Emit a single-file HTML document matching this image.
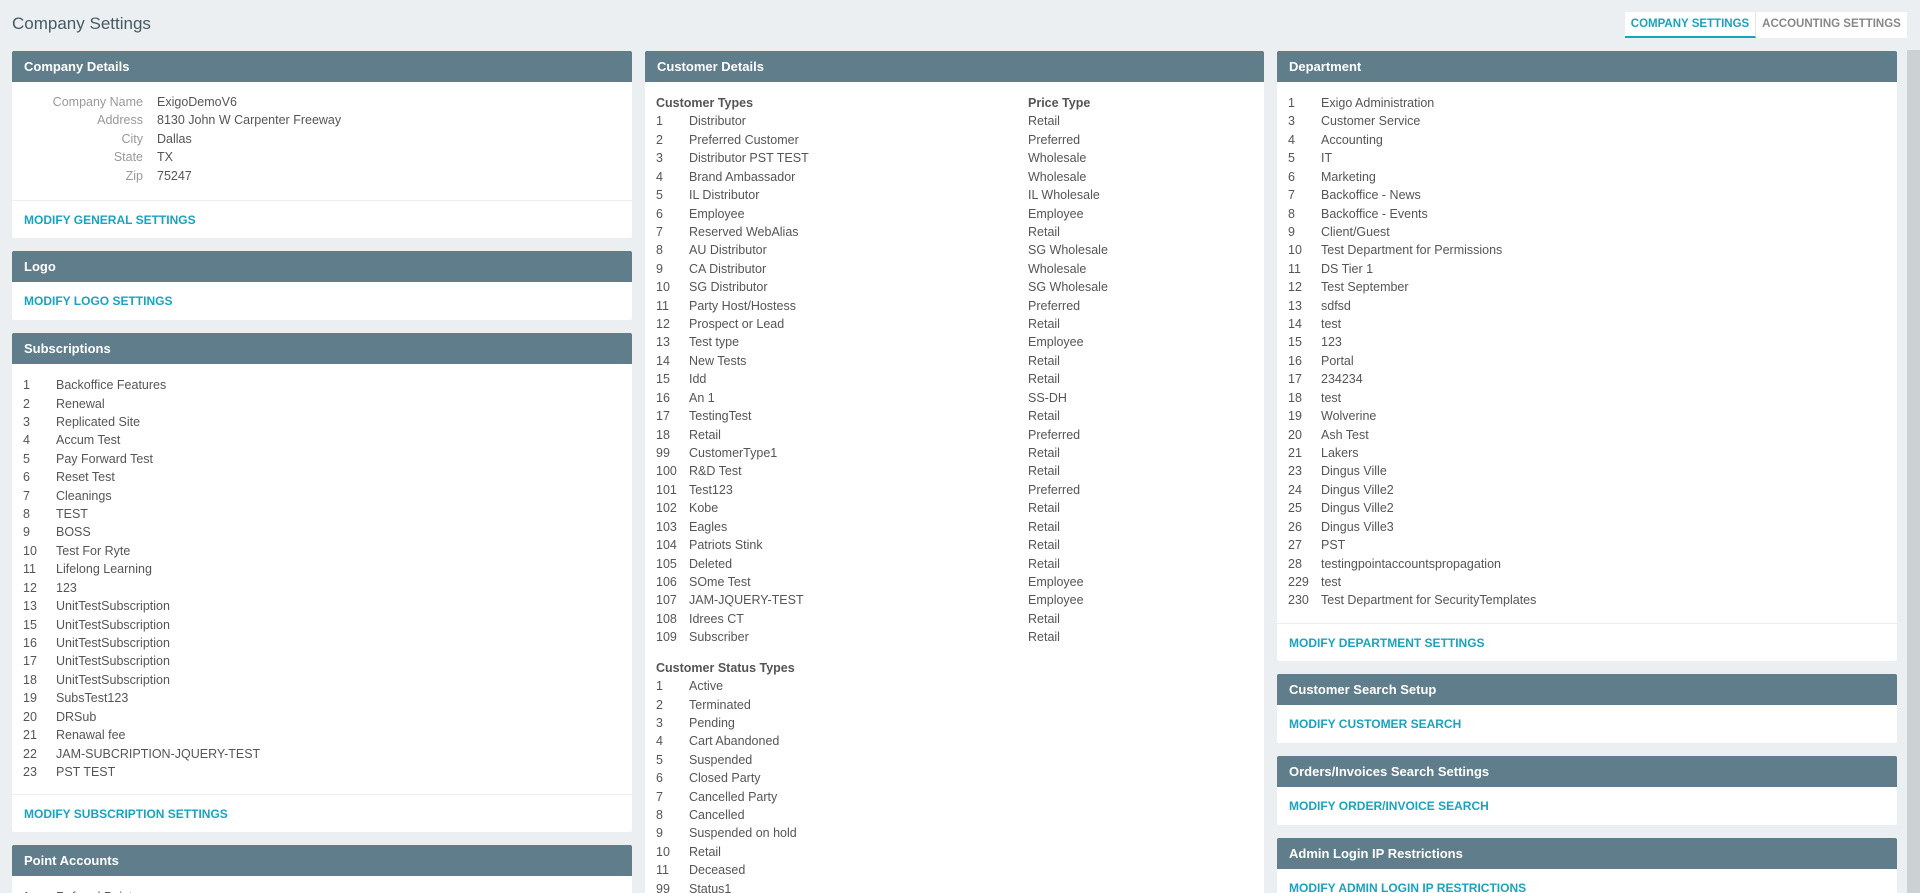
<!DOCTYPE html>
<html><head><meta charset="utf-8"><style>
*{box-sizing:border-box;margin:0;padding:0}
html{height:893px;overflow:hidden}
body{width:1920px;height:893px;overflow:hidden;background:#eceff1;font-family:"Liberation Sans",Arial,sans-serif;font-size:12.5px;color:#555;position:relative}
h1{position:absolute;left:12px;top:13px;font-size:17px;font-weight:normal;color:#455a64;line-height:22px}
.tabs{position:absolute;left:1625px;top:12px;height:26px;width:282px;display:flex;background:#fff;white-space:nowrap}
.tab{font-size:11.5px;font-weight:bold;line-height:24px;color:#888;border-bottom:2px solid transparent;text-align:center}
.tab.a{color:#1aa3bf;border-bottom-color:#1aa3bf;border-right:1px solid #e4e7e9;width:131px}
.tab:not(.a){flex:1}
.sb{position:absolute;left:1907px;top:50px;width:13px;height:843px;background:#ccd1d4}
.col{position:absolute;top:51px}
.p{background:#fff;border-radius:2px;margin-bottom:13px;overflow:hidden}
.h{background:#607d8b;color:#fff;font-weight:bold;height:31px;line-height:31px;padding-left:12px;font-size:13px}
.b{padding:12px 0 13px}
.r{height:18.43px;line-height:18.43px;white-space:nowrap;position:relative}
.n{position:absolute;left:11px}
.t{position:absolute;left:44px}
.pr{position:absolute;left:383px}
.lk{border-top:1px solid #eceff1;height:38px;line-height:38px;padding-left:12px;color:#1aa3bf;font-weight:bold;font-size:12px}
.lk.nb{border-top:none}
.bh{font-weight:bold;color:#555}
.lb{position:absolute;right:calc(100% - 131px);color:#999;text-align:right}
.lv{position:absolute;left:145px}
</style></head><body>
<h1>Company Settings</h1>
<div class="tabs"><div class="tab a">COMPANY SETTINGS</div><div class="tab">ACCOUNTING SETTINGS</div></div>
<div class="sb"></div>

<div class="col" style="left:12px;width:620px">
 <div class="p"><div class="h">Company Details</div>
  <div class="b" style="padding-top:11px;padding-bottom:15px">
   <div class="r"><span class="lb">Company Name</span><span class="lv">ExigoDemoV6</span></div>
   <div class="r"><span class="lb">Address</span><span class="lv">8130 John W Carpenter Freeway</span></div>
   <div class="r"><span class="lb">City</span><span class="lv">Dallas</span></div>
   <div class="r"><span class="lb">State</span><span class="lv">TX</span></div>
   <div class="r"><span class="lb">Zip</span><span class="lv">75247</span></div>
  </div>
  <div class="lk">MODIFY GENERAL SETTINGS</div></div>
 <div class="p"><div class="h">Logo</div><div class="lk nb">MODIFY LOGO SETTINGS</div></div>
 <div class="p"><div class="h">Subscriptions</div><div class="b">
  <div class="r"><span class="n">1</span><span class="t">Backoffice Features</span></div>
  <div class="r"><span class="n">2</span><span class="t">Renewal</span></div>
  <div class="r"><span class="n">3</span><span class="t">Replicated Site</span></div>
  <div class="r"><span class="n">4</span><span class="t">Accum Test</span></div>
  <div class="r"><span class="n">5</span><span class="t">Pay Forward Test</span></div>
  <div class="r"><span class="n">6</span><span class="t">Reset Test</span></div>
  <div class="r"><span class="n">7</span><span class="t">Cleanings</span></div>
  <div class="r"><span class="n">8</span><span class="t">TEST</span></div>
  <div class="r"><span class="n">9</span><span class="t">BOSS</span></div>
  <div class="r"><span class="n">10</span><span class="t">Test For Ryte</span></div>
  <div class="r"><span class="n">11</span><span class="t">Lifelong Learning</span></div>
  <div class="r"><span class="n">12</span><span class="t">123</span></div>
  <div class="r"><span class="n">13</span><span class="t">UnitTestSubscription</span></div>
  <div class="r"><span class="n">15</span><span class="t">UnitTestSubscription</span></div>
  <div class="r"><span class="n">16</span><span class="t">UnitTestSubscription</span></div>
  <div class="r"><span class="n">17</span><span class="t">UnitTestSubscription</span></div>
  <div class="r"><span class="n">18</span><span class="t">UnitTestSubscription</span></div>
  <div class="r"><span class="n">19</span><span class="t">SubsTest123</span></div>
  <div class="r"><span class="n">20</span><span class="t">DRSub</span></div>
  <div class="r"><span class="n">21</span><span class="t">Renawal fee</span></div>
  <div class="r"><span class="n">22</span><span class="t">JAM-SUBCRIPTION-JQUERY-TEST</span></div>
  <div class="r"><span class="n">23</span><span class="t">PST TEST</span></div>
 </div><div class="lk">MODIFY SUBSCRIPTION SETTINGS</div></div>
 <div class="p"><div class="h">Point Accounts</div><div class="b">
  <div class="r"><span class="n">1</span><span class="t">Referral Points</span></div>
 </div></div>
</div>

<div class="col" style="left:645px;width:619px">
 <div class="p" style="height:900px"><div class="h">Customer Details</div><div class="b">
  <div class="r bh"><span class="n">Customer Types</span><span class="pr">Price Type</span></div>
  <div class="r"><span class="n">1</span><span class="t">Distributor</span><span class="pr">Retail</span></div>
  <div class="r"><span class="n">2</span><span class="t">Preferred Customer</span><span class="pr">Preferred</span></div>
  <div class="r"><span class="n">3</span><span class="t">Distributor PST TEST</span><span class="pr">Wholesale</span></div>
  <div class="r"><span class="n">4</span><span class="t">Brand Ambassador</span><span class="pr">Wholesale</span></div>
  <div class="r"><span class="n">5</span><span class="t">IL Distributor</span><span class="pr">IL Wholesale</span></div>
  <div class="r"><span class="n">6</span><span class="t">Employee</span><span class="pr">Employee</span></div>
  <div class="r"><span class="n">7</span><span class="t">Reserved WebAlias</span><span class="pr">Retail</span></div>
  <div class="r"><span class="n">8</span><span class="t">AU Distributor</span><span class="pr">SG Wholesale</span></div>
  <div class="r"><span class="n">9</span><span class="t">CA Distributor</span><span class="pr">Wholesale</span></div>
  <div class="r"><span class="n">10</span><span class="t">SG Distributor</span><span class="pr">SG Wholesale</span></div>
  <div class="r"><span class="n">11</span><span class="t">Party Host/Hostess</span><span class="pr">Preferred</span></div>
  <div class="r"><span class="n">12</span><span class="t">Prospect or Lead</span><span class="pr">Retail</span></div>
  <div class="r"><span class="n">13</span><span class="t">Test type</span><span class="pr">Employee</span></div>
  <div class="r"><span class="n">14</span><span class="t">New Tests</span><span class="pr">Retail</span></div>
  <div class="r"><span class="n">15</span><span class="t">Idd</span><span class="pr">Retail</span></div>
  <div class="r"><span class="n">16</span><span class="t">An 1</span><span class="pr">SS-DH</span></div>
  <div class="r"><span class="n">17</span><span class="t">TestingTest</span><span class="pr">Retail</span></div>
  <div class="r"><span class="n">18</span><span class="t">Retail</span><span class="pr">Preferred</span></div>
  <div class="r"><span class="n">99</span><span class="t">CustomerType1</span><span class="pr">Retail</span></div>
  <div class="r"><span class="n">100</span><span class="t">R&amp;D Test</span><span class="pr">Retail</span></div>
  <div class="r"><span class="n">101</span><span class="t">Test123</span><span class="pr">Preferred</span></div>
  <div class="r"><span class="n">102</span><span class="t">Kobe</span><span class="pr">Retail</span></div>
  <div class="r"><span class="n">103</span><span class="t">Eagles</span><span class="pr">Retail</span></div>
  <div class="r"><span class="n">104</span><span class="t">Patriots Stink</span><span class="pr">Retail</span></div>
  <div class="r"><span class="n">105</span><span class="t">Deleted</span><span class="pr">Retail</span></div>
  <div class="r"><span class="n">106</span><span class="t">SOme Test</span><span class="pr">Employee</span></div>
  <div class="r"><span class="n">107</span><span class="t">JAM-JQUERY-TEST</span><span class="pr">Employee</span></div>
  <div class="r"><span class="n">108</span><span class="t">Idrees CT</span><span class="pr">Retail</span></div>
  <div class="r"><span class="n">109</span><span class="t">Subscriber</span><span class="pr">Retail</span></div>
  <div class="r bh" style="margin-top:12px"><span class="n">Customer Status Types</span></div>
  <div class="r"><span class="n">1</span><span class="t">Active</span></div>
  <div class="r"><span class="n">2</span><span class="t">Terminated</span></div>
  <div class="r"><span class="n">3</span><span class="t">Pending</span></div>
  <div class="r"><span class="n">4</span><span class="t">Cart Abandoned</span></div>
  <div class="r"><span class="n">5</span><span class="t">Suspended</span></div>
  <div class="r"><span class="n">6</span><span class="t">Closed Party</span></div>
  <div class="r"><span class="n">7</span><span class="t">Cancelled Party</span></div>
  <div class="r"><span class="n">8</span><span class="t">Cancelled</span></div>
  <div class="r"><span class="n">9</span><span class="t">Suspended on hold</span></div>
  <div class="r"><span class="n">10</span><span class="t">Retail</span></div>
  <div class="r"><span class="n">11</span><span class="t">Deceased</span></div>
  <div class="r"><span class="n">99</span><span class="t">Status1</span></div>
 </div></div>
</div>

<div class="col" style="left:1277px;width:620px">
 <div class="p"><div class="h">Department</div><div class="b">
  <div class="r"><span class="n">1</span><span class="t">Exigo Administration</span></div>
  <div class="r"><span class="n">3</span><span class="t">Customer Service</span></div>
  <div class="r"><span class="n">4</span><span class="t">Accounting</span></div>
  <div class="r"><span class="n">5</span><span class="t">IT</span></div>
  <div class="r"><span class="n">6</span><span class="t">Marketing</span></div>
  <div class="r"><span class="n">7</span><span class="t">Backoffice - News</span></div>
  <div class="r"><span class="n">8</span><span class="t">Backoffice - Events</span></div>
  <div class="r"><span class="n">9</span><span class="t">Client/Guest</span></div>
  <div class="r"><span class="n">10</span><span class="t">Test Department for Permissions</span></div>
  <div class="r"><span class="n">11</span><span class="t">DS Tier 1</span></div>
  <div class="r"><span class="n">12</span><span class="t">Test September</span></div>
  <div class="r"><span class="n">13</span><span class="t">sdfsd</span></div>
  <div class="r"><span class="n">14</span><span class="t">test</span></div>
  <div class="r"><span class="n">15</span><span class="t">123</span></div>
  <div class="r"><span class="n">16</span><span class="t">Portal</span></div>
  <div class="r"><span class="n">17</span><span class="t">234234</span></div>
  <div class="r"><span class="n">18</span><span class="t">test</span></div>
  <div class="r"><span class="n">19</span><span class="t">Wolverine</span></div>
  <div class="r"><span class="n">20</span><span class="t">Ash Test</span></div>
  <div class="r"><span class="n">21</span><span class="t">Lakers</span></div>
  <div class="r"><span class="n">23</span><span class="t">Dingus Ville</span></div>
  <div class="r"><span class="n">24</span><span class="t">Dingus Ville2</span></div>
  <div class="r"><span class="n">25</span><span class="t">Dingus Ville2</span></div>
  <div class="r"><span class="n">26</span><span class="t">Dingus Ville3</span></div>
  <div class="r"><span class="n">27</span><span class="t">PST</span></div>
  <div class="r"><span class="n">28</span><span class="t">testingpointaccountspropagation</span></div>
  <div class="r"><span class="n">229</span><span class="t">test</span></div>
  <div class="r"><span class="n">230</span><span class="t">Test Department for SecurityTemplates</span></div>
 </div><div class="lk">MODIFY DEPARTMENT SETTINGS</div></div>
 <div class="p"><div class="h">Customer Search Setup</div><div class="lk nb">MODIFY CUSTOMER SEARCH</div></div>
 <div class="p"><div class="h">Orders/Invoices Search Settings</div><div class="lk nb">MODIFY ORDER/INVOICE SEARCH</div></div>
 <div class="p"><div class="h">Admin Login IP Restrictions</div><div class="lk nb">MODIFY ADMIN LOGIN IP RESTRICTIONS</div></div>
</div>
</body></html>
